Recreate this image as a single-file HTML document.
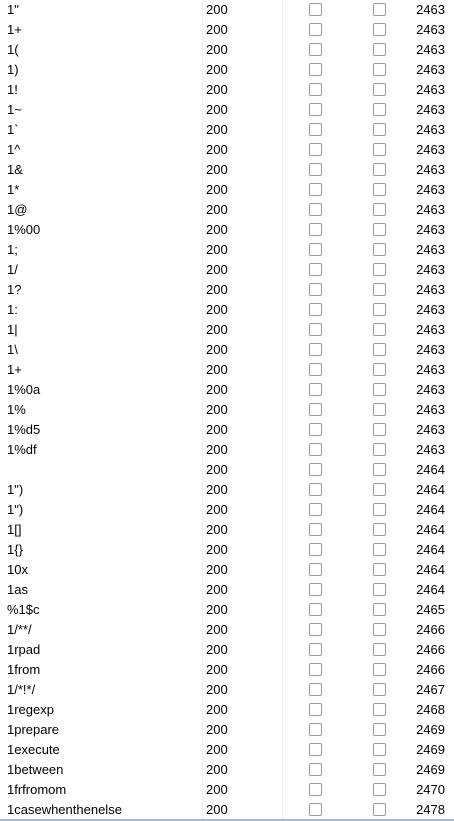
<!DOCTYPE html>
<html><head><style>
body{margin:0;width:454px;height:821px;background:#fff;overflow:hidden;font-family:"Liberation Sans",sans-serif;font-size:13px;color:#000;position:relative}
.r{position:absolute;left:0;width:454px;height:20px}
.r span{position:absolute;top:3px;line-height:14px}
.a{left:7px}.b{left:206px}.n{right:9px}
.c{position:absolute;top:3px;width:11px;height:11px;border:1px solid #999;border-radius:2px}
.s{position:absolute;top:0;width:1px;height:820px;background:#f0f0f0}
.bl{position:absolute;left:0;top:819px;width:454px;height:2px;background:#9ab8d8}
</style></head><body>
<div class="s" style="left:202px"></div><div class="s" style="left:282px"></div>
<div id="t"></div>
<div class="bl"></div>
<script>
var d=[['1"',3],['1+',3],['1(',3],['1)',3],['1!',3],['1~',3],['1`',3],['1^',3],['1&amp;',3],['1*',3],['1@',3],['1%00',3],['1;',3],['1/',3],['1?',3],['1:',3],['1|',3],['1\\',3],['1+',3],['1%0a',3],['1%',3],['1%d5',3],['1%df',3],['',4],['1")',4],['1")',4],['1[]',4],['1{}',4],['10x',4],['1as',4],['%1$c',5],['1/**/',6],['1rpad',6],['1from',6],['1/*!*/',7],['1regexp',8],['1prepare',9],['1execute',9],['1between',9],['1frfromom',70],['1casewhenthenelse',78]];
var h='';d.forEach(function(x,i){var n=x[1]<10?'246'+x[1]:'24'+x[1];h+='<div class="r" style="top:'+(i*20)+'px"><span class="a">'+x[0]+'</span><span class="b">200</span><div class="c" style="left:309px"></div><div class="c" style="left:373px"></div><span class="n">'+n+'</span></div>';});
document.getElementById('t').innerHTML=h;
</script>
</body></html>
